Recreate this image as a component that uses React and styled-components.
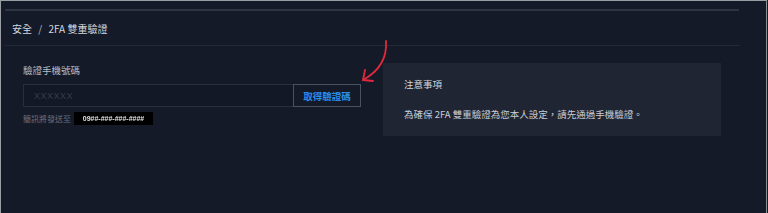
import React from 'react';
import styled, { createGlobalStyle } from 'styled-components';

const GlobalStyle = createGlobalStyle`
  html, body {
    margin: 0;
    padding: 0;
    background: #141a28;
  }
  body {
    font-family: 'Noto Sans CJK TC', 'Noto Sans', sans-serif;
  }
`;

export default function App() {
  return (
    <>
      <GlobalStyle />
      <Frame>
        <Content>
          <TopBar />
          <Breadcrumb>
            安全 <Slash>/</Slash> 2FA 雙重驗證
          </Breadcrumb>
          <Body>
            <Form>
              <Label>驗證手機號碼</Label>
              <InputRow>
                <Input placeholder="XXXXXX" />
                <CodeButton>取得驗證碼</CodeButton>
              </InputRow>
              <Helper>
                簡訊將發送至
                <Redacted>09##-###-###-####</Redacted>
              </Helper>
            </Form>
            <Notice>
              <NoticeTitle>注意事項</NoticeTitle>
              <NoticeText>為確保 2FA 雙重驗證為您本人設定，請先通過手機驗證。</NoticeText>
            </Notice>
          </Body>
        </Content>
        <Arrow width="40" height="50" viewBox="0 0 40 50">
          <path
            d="M30 2 C31 16 27 30 7 41"
            fill="none"
            stroke="#e3283d"
            strokeWidth="1.8"
            strokeLinecap="round"
          />
          <path
            d="M9 31 L7 41 L17 42"
            fill="none"
            stroke="#e3283d"
            strokeWidth="1.8"
            strokeLinecap="round"
            strokeLinejoin="round"
          />
        </Arrow>
      </Frame>
    </>
  );
}

const Frame = styled.div`
  position: relative;
  box-sizing: border-box;
  width: 767px;
  height: 213px;
  background: #141a28;
  border-top: 1px solid #9a9ea4;
  border-left: 1px solid #9a9ea4;
  border-right: 1px solid #8a8e94;
  padding: 0 26px 0 4px;
  overflow: hidden;
`;

const Content = styled.div`
  display: flex;
  flex-direction: column;
`;

const TopBar = styled.div`
  margin-top: 8px;
  height: 2px;
  width: 734px;
  background: #2d3442;
`;

const Breadcrumb = styled.div`
  height: 34px;
  display: flex;
  align-items: center;
  padding-left: 7px;
  font-size: 10px;
  color: #d4d7de;
  border-bottom: 1px solid #222a38;
  white-space: pre;
`;

const Slash = styled.span`
  margin: 0 4px;
  color: #b8bcc4;
`;

const Body = styled.div`
  display: flex;
  gap: 22px;
  padding: 17px 0 0 18px;
`;

const Form = styled.div`
  width: 338px;
  display: flex;
  flex-direction: column;
`;

const Label = styled.div`
  font-size: 9.5px;
  color: #b9bdc6;
  line-height: 14px;
  margin: 0 0 7px;
`;

const InputRow = styled.div`
  display: flex;
  height: 23px;
`;

const Input = styled.input`
  box-sizing: border-box;
  width: 270px;
  height: 23px;
  background: #121826;
  border: 1px solid #272e3c;
  border-right: none;
  padding: 0 10px;
  font-family: 'Liberation Sans', sans-serif;
  font-size: 9px;
  letter-spacing: 0.5px;
  color: #d0d4dc;
  outline: none;
  &::placeholder {
    color: #363d4c;
  }
`;

const CodeButton = styled.button`
  box-sizing: border-box;
  width: 68px;
  height: 23px;
  background: transparent;
  border: 1px solid #4a5160;
  color: #2a8de6;
  font-family: 'Noto Sans CJK TC', sans-serif;
  font-size: 9.5px;
  font-weight: 700;
  padding: 0;
`;

const Helper = styled.div`
  display: flex;
  align-items: center;
  margin-top: 5px;
  font-size: 8px;
  color: #6a7080;
`;

const Redacted = styled.span`
  margin-left: 3px;
  background: #000;
  height: 13px;
  width: 79px;
  display: inline-flex;
  align-items: center;
  justify-content: center;
  box-sizing: border-box;
  color: #e4e4e4;
  font-family: 'Liberation Sans', sans-serif;
  font-size: 7px;
  font-weight: 700;
  white-space: nowrap;
  filter: blur(0.4px);
`;

const Notice = styled.div`
  box-sizing: border-box;
  width: 338px;
  height: 73px;
  background: #1f2532;
  padding: 14px 21px 0;
`;

const NoticeTitle = styled.div`
  font-size: 9.5px;
  color: #d4d7de;
  line-height: 14px;
`;

const NoticeText = styled.div`
  margin-top: 16px;
  font-size: 9.5px;
  color: #c9cdd5;
  line-height: 14px;
  white-space: nowrap;
`;

const Arrow = styled.svg`
  position: absolute;
  left: 355px;
  top: 38px;
`;
